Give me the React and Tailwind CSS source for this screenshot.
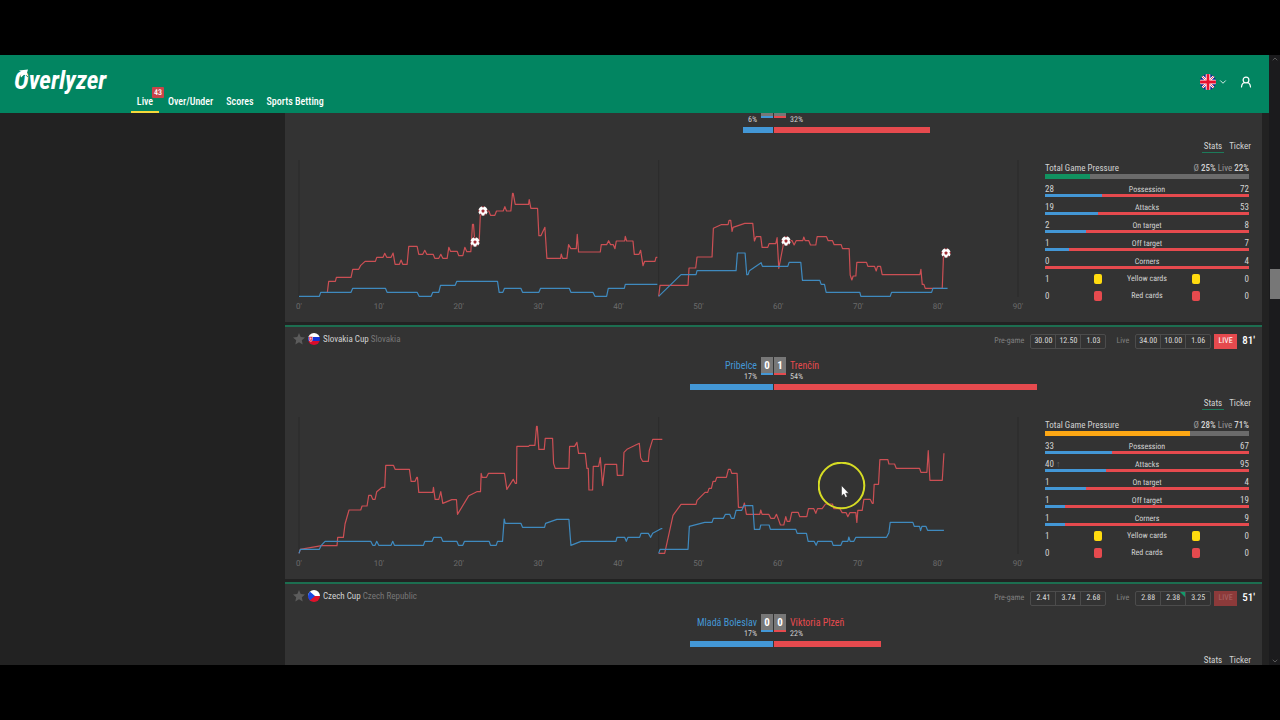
import React from "react";
import { ChevronDown, ChevronUp } from "lucide-react";

const NAV = ["Live", "Over/Under", "Scores", "Sports Betting"];
const TICKS = [0, 10, 20, 30, 40, 50, 60, 70, 80, 90];

// Chart space: 24 units per minute, the second half starts at its own offset.
const CHART_LEFT = 42;
const CHART_WIDTH = 2155;
const CHART_HEIGHT = 411;
const SECOND_HALF = 1095;

const MATCHES = [
  {
    id: "first",
    percent: [6, 32],
    pressure: { average: 25, live: 22, color: "bg-[#119260]" },
    stats: [
      ["Possession", 28, 72, 28],
      ["Attacks", 19, 53, 26],
      ["On target", 2, 8, 20],
      ["Off target", 1, 7, 12],
      ["Corners", 0, 4, 0],
    ],
    cards: { yellow: [1, 0], red: [0, 0] },
    chart: {
      top: 150,
      awayFirst:
        "127,547 131,514 151,514 154,502 198,502 203,478 221,478 227,466 240,454 271,454 275,442 294,442 299,430 305,442 318,442 324,429 330,463 343,463 348,450 353,463 366,463 371,409 396,409 401,433 413,433 419,421 425,433 444,433 449,445 461,445 467,433 473,445 486,445 491,412 496,424 516,424 521,437 533,437 539,412 545,425 557,425 562,343 565,343 569,397 582,397 586,303 611,303 616,316 629,316 634,303 654,303 659,290 664,303 677,303 682,250 684,250 690,283 730,283 732,269 737,295 757,295 761,377 767,377 779,352 785,445 826,445 828,432 832,445 845,445 850,404 857,416 873,416 876,373 880,426 945,426 948,404 964,404 970,392 976,404 984,404 989,416 993,393 1018,393 1020,379 1024,393 1043,393 1047,433 1061,433 1066,421 1073,467 1078,454 1109,454 1112,442 1116,442",
      homeFirst:
        "42,559 103,559 107,547 198,547 203,535 301,535 306,547 396,547 402,559 438,559 443,547 461,547 466,526 510,526 515,514 637,514 642,547 653,547 658,535 707,535 712,547 761,547 766,535 852,535 857,547 923,547 929,559 964,559 969,535 1017,535 1020,523 1116,523",
      awaySecond:
        "25,559 29,526 113,526 116,474 136,474 140,441 185,441 189,355 212,344 233,344 236,331 241,331 245,364 248,352 283,340 307,340 312,393 317,380 331,380 335,412 352,412 356,401 376,401 380,383 385,475 401,392 425,392 431,405 437,392 457,392 460,381 464,392 475,392 480,405 496,405 500,380 528,380 533,392 546,392 551,404 572,404 576,416 596,416 599,495 604,510 608,498 616,498 619,457 648,457 652,469 672,469 677,483 681,469 690,469 695,494 808,494 811,478 815,523 820,523 824,535 875,535 879,429 886,429",
      homeSecond:
        "25,559 92,494 137,494 140,482 257,482 261,429 284,429 289,494 293,494 297,482 332,458 336,469 412,469 416,457 451,457 456,511 508,511 512,523 522,523 527,547 628,547 631,559 719,559 723,547 843,547 847,535 891,535",
      goals: [
        [569, 397],
        [592, 303],
        [1502, 392],
        [1981, 429],
      ],
    },
  },
  {
    id: "second",
    flag: "sk",
    league: "Slovakia Cup",
    country: "Slovakia",
    home: "Pribelce",
    away: "Trenčín",
    score: [0, 1],
    percent: [17, 54],
    pregame: ["30.00", "12.50", "1.03"],
    live: ["34.00", "10.00", "1.06"],
    isLive: true,
    minute: 81,
    pressure: { average: 28, live: 71, color: "bg-[#fda714]" },
    stats: [
      ["Possession", 33, 67, 33],
      ["Attacks", 40, 95, 30],
      ["On target", 1, 4, 20],
      ["Off target", 1, 19, 10],
      ["Corners", 1, 9, 10],
    ],
    rising: "Attacks",
    cards: { yellow: [1, 0], red: [0, 0] },
    chart: {
      top: 291,
      awayFirst:
        "42,700 46,688 110,677 156,677 158,652 175,652 180,612 192,570 227,570 231,558 246,558 251,526 258,526 263,538 270,538 275,515 291,502 299,502 302,436 325,436 330,448 373,448 378,484 390,484 395,472 397,472 401,517 443,517 445,502 450,538 461,538 467,515 473,550 500,539 514,539 517,583 551,527 575,515 586,515 588,460 591,472 604,472 610,460 658,460 665,508 684,478 690,490 694,490 695,379 730,379 733,376 749,376 754,319 756,319 761,388 777,388 780,355 802,355 805,430 810,445 851,445 853,379 868,379 875,367 880,400 900,400 905,445 909,445 911,510 922,510 924,439 940,439 945,413 952,496 959,433 994,433 996,466 1013,466 1016,397 1025,388 1062,370 1066,413 1072,424 1089,424 1092,391 1102,358 1131,358",
      homeFirst:
        "42,700 46,688 103,688 108,677 120,664 257,664 263,676 270,676 275,664 281,676 318,676 323,664 328,676 415,676 419,664 441,664 446,652 468,652 473,664 515,664 520,676 533,676 538,664 612,664 616,676 633,676 637,664 652,664 657,597 660,610 707,610 712,622 778,622 781,610 815,598 851,598 857,676 887,664 992,664 995,652 1018,652 1023,664 1028,652 1063,652 1067,640 1089,640 1096,652 1102,640 1127,626 1131,626",
      awaySecond:
        "25,700 43,700 68,586 92,553 137,553 140,541 164,517 172,517 176,505 183,505 188,484 195,484 199,472 228,472 234,448 240,448 244,460 260,460 264,562 278,562 282,549 288,583 328,583 331,570 335,583 355,583 361,595 372,595 378,583 385,601 390,615 400,615 406,590 410,604 418,604 424,577 443,577 448,590 469,590 474,566 490,566 496,580 501,566 515,566 525,552 546,552 550,566 568,566 575,578 587,578 592,590 598,578 616,578 619,607 622,571 635,571 640,538 659,538 665,550 668,550 671,493 684,493 688,419 712,419 715,432 732,432 737,445 807,445 811,457 829,457 833,392 838,481 875,481 880,400",
      homeSecond:
        "25,700 29,688 113,688 117,619 163,607 185,607 189,595 219,595 225,583 238,583 243,595 251,595 257,571 274,571 280,557 307,557 312,628 328,628 331,615 356,615 360,628 436,628 440,640 468,640 473,664 491,664 497,676 502,664 544,664 548,676 571,676 576,664 592,664 595,651 599,664 610,664 616,652 708,652 715,638 719,607 787,607 791,619 807,619 810,632 814,619 826,619 831,631 880,631",
      goals: [],
    },
  },
  {
    id: "third",
    flag: "cz",
    league: "Czech Cup",
    country: "Czech Republic",
    home: "Mladá Boleslav",
    away: "Viktoria Plzeň",
    score: [0, 0],
    percent: [17, 22],
    pregame: ["2.41", "3.74", "2.68"],
    live: ["2.88", "2.38", "3.25"],
    movedOdd: 1,
    isLive: false,
    minute: 51,
  },
];

function Logo() {
  return (
    <a href="#" aria-label="Overlyzer" className="relative block text-[25px] leading-[30px] font-bold italic text-white">
      Overlyzer
      <svg viewBox="0 0 18 26" className="absolute left-0 top-0 h-[26px] w-[18px]" aria-hidden="true">
        <path d="M8 11.500 L11.500 8.800 L14 11" fill="none" stroke="#028561" strokeWidth="0.900" />
        <path d="M5 4.500 L14 3.500 L12 10 L10.500 8.200 L7 11.500 L6.500 9.500 L8.500 6.500 Z" fill="#fff" />
      </svg>
    </a>
  );
}

function UkFlag() {
  return (
    <svg viewBox="0 0 16 16" className="size-4">
      <clipPath id="uk">
        <circle cx="8" cy="8" r="8" />
      </clipPath>
      <g clipPath="url(#uk)">
        <rect width="16" height="16" fill="#17238c" />
        <path d="M1 1 L15 15 M15 1 L1 15" stroke="#fff" strokeWidth="2.400" />
        <path d="M1 1 L15 15 M15 1 L1 15" stroke="#e8112d" strokeWidth="0.800" />
        <path d="M8 0 V16 M0 8 H16" stroke="#fff" strokeWidth="4.600" />
        <path d="M8 0 V16 M0 8 H16" stroke="#e8112d" strokeWidth="2.800" />
      </g>
    </svg>
  );
}

function CountryFlag({ code, id }) {
  return (
    <svg viewBox="0 0 12 12" className="size-3 shrink-0">
      <clipPath id={id}>
        <circle cx="6" cy="6" r="6" />
      </clipPath>
      <g clipPath={`url(#${id})`}>
        {code === "sk" ? (
          <>
            <rect width="12" height="4" fill="#fff" />
            <rect y="4" width="12" height="4" fill="#1433d6" />
            <rect y="8" width="12" height="4" fill="#d80c2c" />
            <path d="M1 3.500 H4.500 V6 Q4.500 8.200 2.700 8.700 Q1 8.200 1 6 Z" fill="#e5213b" stroke="#fff" strokeWidth="0.500" />
            <path d="M2.700 4.300 V7.500 M1.900 5.400 H3.600" stroke="#fff" strokeWidth="0.500" />
          </>
        ) : (
          <>
            <rect width="12" height="6" fill="#fff" />
            <rect y="6" width="12" height="6" fill="#e0112b" />
            <path d="M0 0 L7 6 L0 12 Z" fill="#1748e0" />
          </>
        )}
      </g>
    </svg>
  );
}

function Header() {
  return (
    <header className="mr-[11px] flex h-[58px] shrink-0 items-stretch bg-[#028561] pl-[14px] pr-[17px] text-white">
      <div className="flex w-[117px] items-start pt-[11px]">
        <Logo />
      </div>
      <nav className="flex items-end gap-[5px]">
        {NAV.map((item, i) => (
          <a
            key={item}
            href="#"
            className={
              i === 0
                ? "relative flex h-[22px] w-7 justify-center border-b-2 border-[#f5d93a] text-[10px] leading-[22px] font-medium"
                : "flex h-[22px] px-1 text-[10px] leading-[22px] font-medium"
            }
          >
            {item}
            {i === 0 && (
              <span className="absolute -top-1 left-[21px] flex h-[11px] w-3 items-center justify-center rounded-[1px] bg-[#c94449] text-[8px] leading-none [text-rendering:geometricPrecision]">
                43
              </span>
            )}
          </a>
        ))}
      </nav>
      <div className="ml-auto flex h-[54px] items-center">
        <button type="button" aria-label="Language" className="flex items-center gap-[2px]">
          <UkFlag />
          <ChevronDown size={10} strokeWidth={2} />
        </button>
        <button type="button" aria-label="Account" className="ml-3">
          <svg viewBox="0 0 12 12" className="size-3" fill="none" stroke="currentColor" strokeWidth="1.200" strokeLinecap="round">
            <circle cx="6" cy="4" r="2.900" />
            <path d="M1.500 11 Q2 7 4.500 6.700 M10.500 11 Q10 7 7.500 6.700" />
          </svg>
        </button>
      </div>
    </header>
  );
}

function Odds({ values, moved }) {
  return (
    <div className="flex h-[15px] w-[76px] divide-x divide-[#4c4c4c] rounded-[2px] border border-[#4c4c4c]">
      {values.map((value, i) => (
        <button
          key={i}
          type="button"
          className="relative flex flex-1 items-center justify-center text-[8px] leading-none text-[#dcdcdc] [text-rendering:geometricPrecision]"
        >
          {value}
          {moved === i && (
            <svg viewBox="0 0 5 5" className="absolute right-0 top-0 size-[5px]">
              <path d="M0 0 H5 V5 Z" fill="#139a6b" />
            </svg>
          )}
        </button>
      ))}
    </div>
  );
}

function MatchHeader({ match }) {
  return (
    <div className="flex h-[22px] items-start pl-2 pr-[7px]">
      <button type="button" aria-label="Favourite" className="mr-[3px] text-[#5c5c5c]">
        <svg viewBox="0 0 12 12" className="size-3" fill="currentColor">
          <path d="M6 0 L7.700 4 L12 4.400 L8.800 7.300 L9.700 11.600 L6 9.300 L2.300 11.600 L3.200 7.300 L0 4.400 L4.300 4 Z" />
        </svg>
      </button>
      <CountryFlag code={match.flag} id={`flag-${match.id}`} />
      <p className="ml-[3px] text-[9px] leading-3 text-[#777]">
        <span className="text-[#d2d2d2]">{match.league}</span> {match.country}
      </p>
      <div className="ml-auto flex h-4 items-center text-[8px] leading-3 text-[#808080] [text-rendering:geometricPrecision]">
        <span className="mr-[6px]">Pre-game</span>
        <Odds values={match.pregame} />
        <span className="ml-[10px] mr-[6px]">Live</span>
        <Odds values={match.live} moved={match.movedOdd} />
        <span
          className={
            match.isLive
              ? "ml-[3px] flex h-[15px] w-[23px] items-center justify-center bg-[#e64a4e] text-white"
              : "ml-[3px] flex h-[15px] w-[23px] items-center justify-center bg-[#8c3a3a] text-[#a86464]"
          }
        >
          LIVE
        </span>
        <span className="ml-[5px] text-[11px] font-medium text-white">{match.minute}'</span>
      </div>
    </div>
  );
}

function Scoreline({ match }) {
  const [homePercent, awayPercent] = match.percent;
  const [homeScore, awayScore] = match.score || [];
  return (
    <div className="pt-[2px]">
      <div className="grid grid-cols-[1fr_25px_1fr] gap-x-1">
        <div className="text-right">
          <h2 className="h-[15px] text-[10px] leading-[18px] text-[#4397d6]">{match.home}</h2>
          <p className="text-[8px] leading-[10px] text-[#d2d2d2] [text-rendering:geometricPrecision]">{homePercent}%</p>
        </div>
        <div className="flex h-[18px] gap-px text-[11px] leading-[18px] font-bold text-white">
          <span className="w-3 border-b-2 border-[#4397d6] bg-[#777] text-center">{homeScore}</span>
          <span className="w-3 border-b-2 border-[#e64a4e] bg-[#777] text-center">{awayScore}</span>
        </div>
        <div>
          <h2 className="h-[15px] text-[10px] leading-[18px] text-[#e64a4e]">{match.away}</h2>
          <p className="text-[8px] leading-[10px] text-[#d2d2d2] [text-rendering:geometricPrecision]">{awayPercent}%</p>
        </div>
      </div>
      <div className="mt-[2px] grid h-[6px] grid-cols-2">
        <div className="flex justify-end border-r border-[#333]">
          <div className="bg-[#4397d6]" style={{ width: `${homePercent}%` }} />
        </div>
        <div className="flex">
          <div className="bg-[#e64a4e]" style={{ width: `${awayPercent}%` }} />
        </div>
      </div>
    </div>
  );
}

function Goal({ x, y }) {
  return (
    <svg viewBox="0 0 10 10" className="absolute size-[10px] -translate-x-1/2 -translate-y-1/2" style={{ left: `${x}%`, top: `${y}%` }}>
      <circle cx="5" cy="5" r="4.700" fill="#fff" />
      <path d="M5 3.300 L6.700 4.500 L6 6.500 H4 L3.300 4.500 Z" fill="#a32e36" />
      <path d="M3.300 0 L5 1.700 L6.700 0 Z M10 3.200 L8.300 4.800 L10 6.200 Z M8.500 9 L7.200 7.200 L6 9.800 Z M1.500 9 L2.800 7.200 L4 9.800 Z M0 3.200 L1.700 4.800 L0 6.200 Z" fill="#7a2f34" />
    </svg>
  );
}

function Line({ points, color }) {
  return (
    <polyline points={points} fill="none" stroke={color} strokeWidth="1.200" strokeLinejoin="round" vectorEffect="non-scaling-stroke" />
  );
}

function PressureChart({ chart }) {
  const { top } = chart;
  return (
    <div className="min-w-0 flex-1">
      <div className="relative h-[137px]">
        <svg
          viewBox={`${CHART_LEFT} ${top} ${CHART_WIDTH} ${CHART_HEIGHT}`}
          preserveAspectRatio="none"
          className="h-full w-full overflow-visible"
        >
          {[42, 1120, 2197].map((x) => (
            <line key={x} x1={x} x2={x} y1={top} y2={top + 411} stroke="#2b2b2b" vectorEffect="non-scaling-stroke" />
          ))}
          <Line points={chart.awayFirst} color="#cc4f54" />
          <Line points={chart.homeFirst} color="#3f8abf" />
          <g transform={`translate(${SECOND_HALF} 0)`}>
            <Line points={chart.awaySecond} color="#cc4f54" />
            <Line points={chart.homeSecond} color="#3f8abf" />
          </g>
        </svg>
        {chart.goals.map(([x, y]) => (
          <Goal key={x} x={((x - CHART_LEFT) / CHART_WIDTH) * 100} y={((y - top) / CHART_HEIGHT) * 100} />
        ))}
      </div>
      <div className="mt-1 flex justify-between font-[Roboto] text-[8px] leading-3 text-[#6c6c6c] [text-rendering:geometricPrecision]">
        {TICKS.map((tick) => (
          <span key={tick} className="flex w-0 justify-center">
            {tick}'
          </span>
        ))}
      </div>
    </div>
  );
}

function CardRow({ label, values, color }) {
  return (
    <div className="grid h-[17px] grid-cols-[49px_8px_1fr_8px_49px] items-center leading-3">
      <span>{values[0]}</span>
      <span className={`h-[10px] rounded-[2px] ${color}`} />
      <span className="text-center text-[8px] [text-rendering:geometricPrecision]">{label}</span>
      <span className={`h-[10px] rounded-[2px] ${color}`} />
      <span className="text-right">{values[1]}</span>
    </div>
  );
}

function StatsPanel({ match }) {
  const { pressure, stats, cards, rising } = match;
  return (
    <div className="w-[204px] shrink-0 pt-[2px] text-[9px] text-[#d2d2d2]">
      <div className="flex justify-between leading-3">
        <span>Total Game Pressure</span>
        <span className="text-[#999]">
          Ø <b className="font-medium text-[#d2d2d2]">{pressure.average}%</b> Live{" "}
          <b className="font-medium text-[#d2d2d2]">{pressure.live}%</b>
        </span>
      </div>
      <div className="h-[5px] bg-[#6b6b6b]">
        <div className={`h-full ${pressure.color}`} style={{ width: `${pressure.live}%` }} />
      </div>
      <div className="mt-1 flex flex-col gap-1">
        {stats.map(([label, home, away, share]) => (
          <div key={label}>
            <div className="grid h-[11px] grid-cols-3 leading-[13px]">
              <span>
                {home}
                {rising === label && <span className="ml-[2px] text-[#666]">↑</span>}
              </span>
              <span className="text-center text-[8px] [text-rendering:geometricPrecision]">{label}</span>
              <span className="text-right">{away}</span>
            </div>
            <div className="flex h-[3px] bg-[#e64a4e]">
              <div className="bg-[#4397d6]" style={{ width: `${share}%` }} />
            </div>
          </div>
        ))}
      </div>
      <div className="mt-px">
        <CardRow label="Yellow cards" values={cards.yellow} color="bg-[#ffdb0f]" />
        <CardRow label="Red cards" values={cards.red} color="bg-[#e64a4e]" />
      </div>
    </div>
  );
}

function MatchCard({ match }) {
  return (
    <article className="min-h-[254px] shrink-0 border-t-2 border-[#1c6e50] bg-[#333] pt-[6px]">
      {match.league ? <MatchHeader match={match} /> : <div className="h-[22px]" />}
      <Scoreline match={match} />
      <div className="mt-[6px] flex h-[14px] justify-end gap-[3px] pr-[9px] text-[9px] leading-3 text-[#d2d2d2]">
        <button type="button" className="border-b border-[#1c7a5a] px-[2px]">
          Stats
        </button>
        <button type="button" className="border-b border-transparent px-[2px]">
          Ticker
        </button>
      </div>
      {match.chart && (
        <div className="mt-[7px] flex gap-[27px] pl-[14px] pr-[13px]">
          <PressureChart chart={match.chart} />
          <StatsPanel match={match} />
        </div>
      )}
    </article>
  );
}

function Scrollbar() {
  return (
    <div className="absolute inset-y-0 right-0 w-[11px] bg-[#1b1b1d] text-[#777]">
      <ChevronUp size={8} className="absolute left-[2px] top-0" />
      <div className="absolute left-px right-0 top-[35%] h-[30px] bg-[#777]" />
      <ChevronDown size={8} className="absolute bottom-0 left-[2px]" />
    </div>
  );
}

function Pointer() {
  return (
    <svg viewBox="0 0 48 48" className="pointer-events-none absolute left-[818px] top-[462px] size-12">
      <circle cx="23.500" cy="23.500" r="22.800" fill="none" stroke="#d6dc24" strokeWidth="2" />
      <path d="M23.500 23.500 V34 L25.800 32 L27.500 35.500 L29.300 34.500 L27.700 31.200 H30.800 Z" fill="#fff" stroke="#222" strokeWidth="0.500" />
    </svg>
  );
}

function App() {
  return (
    <div className="relative h-screen bg-black py-[55px] font-['Roboto_Condensed','Liberation_Sans_Narrow',Roboto,sans-serif]">
      <div className="relative flex h-full flex-col overflow-hidden bg-[#222]">
        <Header />
        <main className="min-h-0 flex-1 overflow-hidden pl-[285px] pr-[18px]">
          {/* the list is scrolled a little way into its first card */}
          <div className="-mt-[45px] flex flex-col gap-[3px]">
            {MATCHES.map((match) => (
              <MatchCard key={match.id} match={match} />
            ))}
          </div>
        </main>
        <Scrollbar />
      </div>
      <Pointer />
    </div>
  );
}

export default App;
